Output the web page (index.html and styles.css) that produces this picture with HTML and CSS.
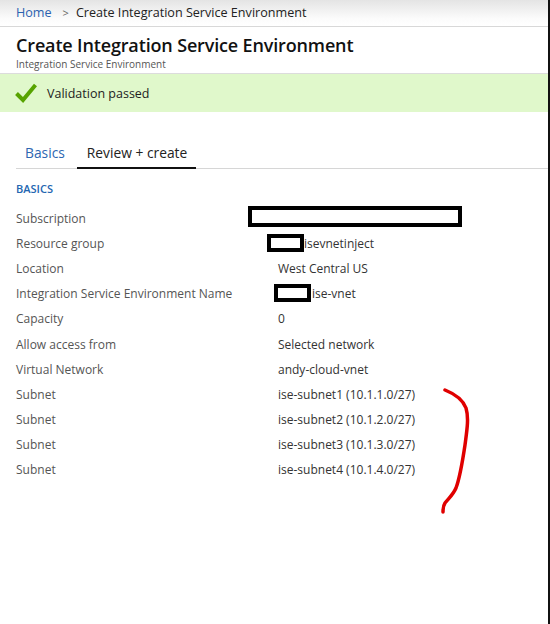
FILE: index.html
```html
<!DOCTYPE html>
<html>
<head>
<meta charset="utf-8">
<link rel="stylesheet" href="styles.css">
</head>
<body>
<div class="page">
  <div class="crumbs"><a class="crumb-link">Home</a><span class="crumb-sep">&gt;</span><span class="crumb-cur">Create Integration Service Environment</span></div>
  <div class="head">
    <h1 class="title">Create Integration Service Environment</h1>
    <div class="subtitle">Integration Service Environment</div>
  </div>
  <div class="banner">
    <svg class="check" width="22" height="20" viewBox="0 0 22 20"><path d="M1.5 10.5 L8 17 L20.5 2" fill="none" stroke="#57a300" stroke-width="4"/></svg>
    <span>Validation passed</span>
  </div>
  <div class="tabs">
    <span class="tab tab-link">Basics</span>
    <span class="tab tab-active">Review + create</span>
  </div>
  <div class="section">BASICS</div>
  <div class="rows">
    <div class="row"><span class="label">Subscription</span><span class="value"><span class="redact redact-sub"></span></span></div>
    <div class="row"><span class="label">Resource group</span><span class="value"><span class="redact redact-rg"></span>isevnetinject</span></div>
    <div class="row"><span class="label">Location</span><span class="value">West Central US</span></div>
    <div class="row"><span class="label">Integration Service Environment Name</span><span class="value"><span class="redact redact-ise"></span>ise-vnet</span></div>
    <div class="row"><span class="label">Capacity</span><span class="value">0</span></div>
    <div class="row"><span class="label">Allow access from</span><span class="value">Selected network</span></div>
    <div class="row"><span class="label">Virtual Network</span><span class="value">andy-cloud-vnet</span></div>
    <div class="row"><span class="label">Subnet</span><span class="value">ise-subnet1 (10.1.1.0/27)</span></div>
    <div class="row"><span class="label">Subnet</span><span class="value">ise-subnet2 (10.1.2.0/27)</span></div>
    <div class="row"><span class="label">Subnet</span><span class="value">ise-subnet3 (10.1.3.0/27)</span></div>
    <div class="row"><span class="label">Subnet</span><span class="value">ise-subnet4 (10.1.4.0/27)</span></div>
  </div>
  <svg class="bracket" width="550" height="624" viewBox="0 0 550 624"><path d="M445 390 C455 394 463 400 466 408 C469 418 467 430 465 445 C462 465 459 480 456 488 C453 495 448 499 445 503 C443 506 443 509 443 512" fill="none" stroke="#e00000" stroke-width="3.5" stroke-linecap="round"/></svg>
</div>
</body>
</html>
```
FILE: styles.css
```css
* { box-sizing: border-box; }
html, body { margin: 0; padding: 0; background: #fff; }
body { font-family: "Open Sans", "Liberation Sans", sans-serif; color: #333; }
.page {
  position: relative;
  width: 550px;
  height: 624px;
  border-right: 2px solid #111;
  overflow: hidden;
}
.crumbs {
  height: 27px;
  padding: 0 0 0 16px;
  font-size: 12.6px;
  line-height: 18px;
  background: linear-gradient(#e4e4e4, #fbfbfb 70%, #fff);
  border-bottom: 1px solid #d8d8d8;
  display: flex;
  align-items: center;
}
.crumb-link { color: #2b62b0; }
.crumb-sep { color: #666; margin: 0 7px 0 11px; font-size: 11px; }
.crumb-cur { color: #222; }
.head {
  height: 47px;
  padding: 7px 16px 0;
  border-bottom: 1px solid #dcdcdc;
}
.title {
  margin: 0;
  font-size: 18px;
  line-height: 22px;
  font-weight: 600;
  color: #111;
  letter-spacing: -0.15px;
}
.subtitle {
  font-size: 10px;
  line-height: 14px;
  color: #555;
  margin-top: 1px;
}
.banner {
  height: 38px;
  background: #e0f8cb;
  display: flex;
  align-items: center;
  padding-left: 15px;
  font-size: 12.5px;
  color: #222;
}
.check { margin-right: 10px; }
.tabs {
  margin: 27px 0 0 16px;
  height: 30px;
  border-bottom: 1px solid #d6d6d6;
  display: flex;
  font-size: 13.8px;
  line-height: 20px;
}
.tab { padding: 4px 0 0; }
.tab-link { color: #2d67b1; margin-left: 9px; margin-right: 12px; }
.tab-active {
  color: #222;
  padding-left: 10px;
  padding-right: 9px;
  border-bottom: 2px solid #111;
  margin-bottom: -1px;
}
.section {
  margin: 12px 0 0 16px;
  font-size: 11px;
  font-weight: 600;
  color: #2366b1;
  line-height: 16px;
}
.rows { margin-top: 9px; }
.row {
  display: flex;
  height: 25.2px;
  align-items: center;
  font-size: 12px;
  line-height: 16px;
}
.label { width: 278px; padding-left: 16px; color: #555; }
.value { color: #333; display: flex; align-items: center; }
.redact {
  display: inline-block;
  border: 4px solid #000;
  background: #fff;
}
.redact-sub { width: 214px; height: 21px; margin-left: -30px; margin-top: -4px; }
.redact-rg { width: 37px; height: 18px; margin-left: -11px; margin-right: 0; margin-top: -2px; }
.redact-ise { width: 37px; height: 18px; margin-left: -4px; margin-right: 1px; margin-top: -2px; }
.bracket { position: absolute; left: 0; top: 0; pointer-events: none; }
```
